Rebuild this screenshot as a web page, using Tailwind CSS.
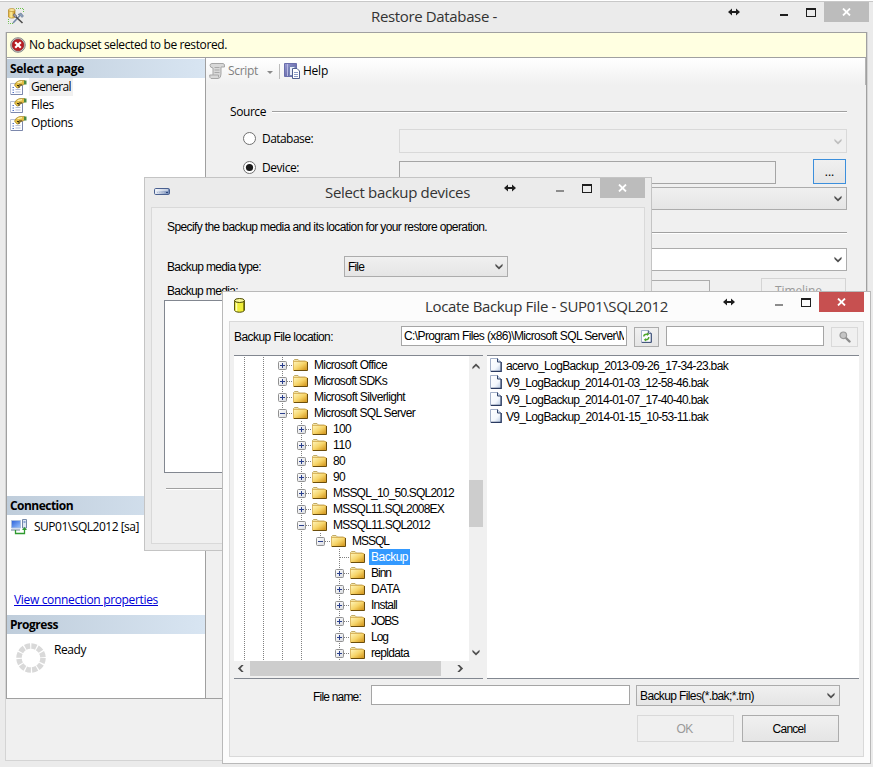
<!DOCTYPE html>
<html lang="en">
<head>
<meta charset="utf-8">
<title>Restore Database</title>
<script src="https://cdn.jsdelivr.net/npm/@tailwindcss/browser@4"></script>
</head>
<body class="relative w-[873px] h-[767px] overflow-hidden bg-white text-black text-[12px] leading-[16px] whitespace-nowrap font-['Open_Sans','Noto_Sans',sans-serif]">

<svg class="absolute w-0 h-0">
  <defs>
    <linearGradient id="gFolder" x1="0" y1="0" x2="1" y2="1"><stop offset="0" stop-color="#fff6bd"/><stop offset=".5" stop-color="#f6d468"/><stop offset="1" stop-color="#cf8d10"/></linearGradient>
    <linearGradient id="gBox" x1="0" y1="0" x2="1" y2="1"><stop offset="0" stop-color="#fff"/><stop offset="1" stop-color="#d9dbe0"/></linearGradient>
    <linearGradient id="gDoc" x1="0" y1="0" x2="1" y2="1"><stop offset="0" stop-color="#fff"/><stop offset=".6" stop-color="#f4f8fd"/><stop offset="1" stop-color="#b4c6e0"/></linearGradient>
    <linearGradient id="gGold" x1="0" y1="0" x2="1" y2="0"><stop offset="0" stop-color="#e0a92a"/><stop offset=".4" stop-color="#fff0a0"/><stop offset="1" stop-color="#c4860c"/></linearGradient>
    <linearGradient id="gBook" x1="0" y1="0" x2="1" y2="1"><stop offset="0" stop-color="#9a9cd4"/><stop offset="1" stop-color="#4b4f92"/></linearGradient>
    <linearGradient id="gScreen" x1="0" y1="0" x2="1" y2="1"><stop offset="0" stop-color="#2a5fd8"/><stop offset="1" stop-color="#9cc6ff"/></linearGradient>
    <linearGradient id="gDisk" x1="0" y1="0" x2="1" y2="0"><stop offset="0" stop-color="#f4f7fb"/><stop offset="1" stop-color="#6d86b4"/></linearGradient>

    <symbol id="folder" viewBox="0 0 15 12">
      <path d="M.5 3V1.500L1.500 .5H5L6.500 2H12.500V4" fill="#f2e2a4" stroke="#c2ab66"/>
      <path d="M.5 2.500H14V11.500H.5Z" fill="url(#gFolder)" stroke="#d3a94a" stroke-width=".8"/>
      <path d="M14.500 3V11.500H1" fill="none" stroke="#6b4d0c" stroke-width="1"/>
    </symbol>
    <symbol id="doc" viewBox="0 0 12 14">
      <path d="M.5 .5H7.5L11 4V13.5H.5Z" fill="url(#gDoc)" stroke="#a3b0c8"/>
      <path d="M7.5 .5V4H11" fill="#cfdcee" stroke="#33456b"/>
      <path d="M11.200 4V13.400H1" fill="none" stroke="#2a3a60" stroke-width="1.300"/>
    </symbol>
    <symbol id="page" viewBox="0 0 17 15">
      <path d="M.5 3.500H12.500V14.500H.5Z" fill="#fdfdff" stroke="#b8bfd2"/>
      <path d="M12.500 5V14.500H1" fill="none" stroke="#7c88ac"/>
      <path d="M2.500 7.500H4M2.500 10H4M2.500 12.500H4" stroke="#5475c6" stroke-width="1.200"/>
      <path d="M5.500 9.500H10.500M5.500 12H10.500" stroke="#b4bdd6"/>
      <path d="M4.500 5L6.500 2L9.500 .500H14.500V4L13 5H11.500L8.500 8H7L5.500 6.500Z" fill="#e3bd45" stroke="#a5862c" stroke-width=".7"/>
      <path d="M7.500 2.700L12 1.700" stroke="#fff4b4" stroke-width="1.300"/>
      <path d="M14 .500H16.500V4.500H14Z" fill="#4b8a3f"/>
      <path d="M7 5.500h2M8 7h2M9 5h3" stroke="#3a3012" stroke-width="1"/>
    </symbol>
    <symbol id="chev" viewBox="0 0 9 7"><path d="M.5 .5V3L4.500 7L8.500 3V.5L4.500 4Z" fill="currentColor"/></symbol>
    <symbol id="x" viewBox="0 0 9 8"><path d="M1 .5L8 7.500M8 .5L1 7.500" stroke="#fff" stroke-width="1.800" fill="none"/></symbol>
    <symbol id="wbtn" viewBox="0 0 96 20">
      <path d="M0 10L4 6.500V9H8V6.500L12 10L8 13.500V11H4V13.500Z" fill="#1e1e1e"/>
      <path d="M52 12H60V14H52Z" fill="currentColor"/>
      <path d="M78 6H88V15H78ZM79 8V14H87V8Z" fill="#1e1e1e" fill-rule="evenodd"/>
    </symbol>
  </defs>
</svg>

<!-- Restore Database window -->
<section class="absolute inset-0 top-px border-t border-[#c8c8c8] bg-[#ebebeb] flex flex-col">
  <header class="grid h-[30px] shrink-0">
    <h1 class="col-start-1 row-start-1 pr-[5px] text-center text-[15px] leading-[28px] text-[#333]"><span data-w="126">Restore Database -</span></h1>
    <div class="col-start-1 row-start-1 flex items-start pl-[8px] pr-[4px]">
      <svg class="mt-[6px] w-[16px] h-[16px]" viewBox="0 0 16 16">
        <path d="M8 .5H15.500V5M.5 11V15.500H6" fill="none" stroke="#6cc04a" stroke-dasharray="1 1"/>
        <path d="M.5 2V9C1.500 10.500 6 10.500 7 9V2Z" fill="url(#gGold)" stroke="#a97a16" stroke-width=".6"/>
        <ellipse cx="3.800" cy="2" rx="3.300" ry="1.500" fill="#fbe79a" stroke="#a97a16" stroke-width=".6"/>
        <path d="M5 15L12 7.500" stroke="#7489a8" stroke-width="1.600"/><path d="M6.500 7.500L14.500 15" stroke="#4b4b4b" stroke-width="1.600"/>
        <path d="M10 6.500L13 5L15.500 8L14 9.500L12.500 7.500Z" fill="#8ba0bd" stroke="#50617c" stroke-width=".5"/>
        <path d="M5 7.500L6 5.500L9 8L7.500 9.500Z" fill="#99a" stroke="#555" stroke-width=".5"/>
      </svg>
      <svg class="ml-auto w-[96px] h-[20px] text-[#1e1e1e]"><use href="#wbtn"/></svg>
      <span class="flex h-[20px] w-[45px] items-center justify-center bg-[#bcbcbc]"><svg class="w-[9px] h-[8px]"><use href="#x"/></svg></span>
    </div>
  </header>
  <div class="ml-[5px] mr-[5px] flex h-[729px] flex-col border-x border-b border-[#d4d4d4] bg-[#f0f0f0]">
    <div class="flex h-[667px] shrink-0 flex-col border border-[#a0a0a0]">
      <div class="flex h-[25px] shrink-0 items-center border-b border-[#a0a0a0] bg-[#ffffe1] pl-[3px]">
        <svg class="w-[16px] h-[16px]" viewBox="0 0 16 16"><circle cx="8" cy="8" r="7.300" fill="#c8c8c8" stroke="#8a8a8a"/><circle cx="8" cy="8" r="5.800" fill="#b81c22" stroke="#8c1016" stroke-width=".6"/><path d="M5.200 5.200L10.800 10.800M10.800 5.200L5.200 10.800" stroke="#fff" stroke-width="2.200"/></svg>
        <span class="ml-[3px]" data-w="198">No backupset selected to be restored.</span>
      </div>
      <div class="flex flex-1">
        <aside class="flex w-[199px] flex-col border-r border-[#a0a0a0] bg-white">
          <h2 class="mt-px h-[19px] bg-gradient-to-r from-[#bfcddb] to-[#d8e5f2] pl-[3px] font-bold leading-[20px]"><span data-w="74">Select a page</span></h2>
          <ul class="h-[418px]">
            <li class="flex h-[18px] items-center pl-[3px]"><svg class="w-[17px] h-[15px]"><use href="#page"/></svg><span class="ml-[2px] bg-[#f0f0f0] px-[2px] leading-[18px]"><span data-w="40">General</span></span></li>
            <li class="flex h-[18px] items-center pl-[3px]"><svg class="w-[17px] h-[15px]"><use href="#page"/></svg><span class="ml-[4px]" data-w="23">Files</span></li>
            <li class="flex h-[18px] items-center pl-[3px]"><svg class="w-[17px] h-[15px]"><use href="#page"/></svg><span class="ml-[4px]" data-w="42">Options</span></li>
          </ul>
          <h2 class="h-[19px] bg-gradient-to-r from-[#bfcddb] to-[#d8e5f2] pl-[3px] font-bold leading-[20px]"><span data-w="63">Connection</span></h2>
          <div class="flex h-[24px] items-center pl-[4px]">
            <svg class="w-[17px] h-[16px]" viewBox="0 0 17 16"><path d="M.5 1.500H9.500V9H.5Z" fill="url(#gScreen)" stroke="#a9bede"/><path d="M0 11H9" stroke="#9aa8bb" stroke-width="1.500"/><path d="M11.500 .5H15.500V9H11.500Z" fill="#dfe8f4" stroke="#7488a8"/><path d="M12.500 3H14.500" stroke="#3b67b8"/><path d="M4.500 11V14.500H13.500V10" fill="none" stroke="#2f9a2f" stroke-width="1.300"/><path d="M11 11L13.500 8L16 11Z" fill="#2f9a2f"/></svg>
            <span class="ml-[6px]" data-w="105">SUP01\SQL2012 [sa]</span>
          </div>
          <a class="mt-[53px] block h-[16px] pl-[7px] text-[#0000d8] underline"><span data-w="144">View connection properties</span></a>
          <h2 class="mt-[7px] h-[19px] bg-gradient-to-r from-[#bfcddb] to-[#d8e5f2] pl-[3px] font-bold leading-[20px]"><span data-w="48">Progress</span></h2>
          <div class="flex pl-[9px]">
            <svg class="mt-[9px] w-[30px] h-[30px]" viewBox="0 0 30 30"><circle cx="15" cy="15" r="12" fill="none" stroke="#d9d9d9" stroke-width="5.500" stroke-dasharray="5.080 1.200"/></svg>
            <span class="mt-[8px] ml-[8px]" data-w="32">Ready</span>
          </div>
        </aside>
        <main class="flex-1">
          <div class="flex h-[27px] items-center border-r border-[#b4b4b4] bg-gradient-to-b from-white to-[#f0f0f0] pb-px pl-[3px]">
            <svg class="w-[17px] h-[16px]" viewBox="0 0 17 16"><path d="M3 .5H14Q16 .5 15.500 4H12V11Q12 15 9.500 15.500H2Q.5 15 .7 12H4V5Q1 4.500 1 2.500Q1 .5 3 .5Z" fill="#d8d8d8" stroke="#a6a6a6"/><path d="M5.500 4.500H10.500M5.500 7H10.500M5.500 9.500H10.500M4 12H9.500V14.500" stroke="#a8a8a8" fill="none"/></svg>
            <span class="ml-[2px] text-[#808080]" data-w="30">Script</span>
            <svg class="ml-[9px] mt-[2px] w-[6px] h-[3px]" viewBox="0 0 6 3"><path d="M0 0H6L3 3Z" fill="#8a8a8a"/></svg>
            <span class="ml-[6px] h-[15px] w-px bg-[#bdbdbd]"></span>
            <svg class="ml-[4px] w-[16px] h-[16px]" viewBox="0 0 16 16"><path d="M.5 .5H12.500V13.500H.5Z" fill="url(#gBook)" stroke="#6a6eac"/><path d="M3.500 1V13" stroke="#b9bce4"/><path d="M5.500 3.500H10L12 5.500V12.500H5.500Z" fill="#e9eefa" stroke="#7484b4"/><path d="M8.500 5.500H13L15.500 8V15.500H8.500Z" fill="#fff" stroke="#506090"/><path d="M10 9.500H14M10 11.500H14M10 13.500H14" stroke="#8c9dc8"/></svg>
            <span class="ml-[3px]" data-w="25">Help</span>
          </div>
          <div class="pl-[24px] pr-[19px]">
            <div class="flex pt-[19px]"><span data-w="36">Source</span><span class="ml-[6px] mt-[7px] h-[2px] flex-1 border-t border-[#a0a0a0] bg-white"></span></div>
            <div class="mt-[9px] flex h-[24px] items-start pl-[13px]">
              <svg class="mt-[3px] w-[13px] h-[13px]" viewBox="0 0 13 13"><circle cx="6.500" cy="6.500" r="6" fill="#fff" stroke="#707070"/></svg>
              <span class="ml-[6px] mt-[2px] w-[137px]"><span data-w="51">Database:</span></span>
              <span class="flex h-[24px] flex-1 items-center justify-end border border-[#d9d9d9] pr-[4px] text-[#bfbfbf]"><svg class="w-[8px] h-[7px]"><use href="#chev"/></svg></span>
            </div>
            <div class="mt-[6px] flex h-[28px] items-start pl-[13px]">
              <svg class="mt-[2px] w-[13px] h-[13px]" viewBox="0 0 13 13"><circle cx="6.500" cy="6.500" r="6" fill="#fff" stroke="#707070"/><circle cx="6.500" cy="6.500" r="3.600" fill="#1a1a1a"/></svg>
              <span class="ml-[6px] mt-[1px] w-[137px]"><span data-w="37">Device:</span></span>
              <span class="mt-[2px] h-[23px] w-[377px] border border-[#a5a5a5]"></span>
              <span class="ml-auto mr-px flex h-[25px] w-[33px] items-center justify-center border border-[#3c8fdc] bg-gradient-to-b from-[#f0f0f0] to-[#e5e5e5]">...</span>
            </div>
            <div class="ml-[169px] flex h-[23px] items-center justify-end border border-[#acacac] bg-gradient-to-b from-[#f0f0f0] to-[#e5e5e5] pr-[4px] text-[#505050]"><svg class="w-[8px] h-[7px]"><use href="#chev"/></svg></div>
            <div class="mt-[22px] h-[2px] border-t border-[#a0a0a0] bg-white"></div>
            <div class="ml-[169px] mt-[14px] flex h-[23px] items-center justify-end border border-[#acacac] bg-white pr-[4px] text-[#505050]"><svg class="w-[8px] h-[7px]"><use href="#chev"/></svg></div>
            <div class="mt-[7px] flex justify-between pl-[169px] pr-px">
              <span class="mt-[2px] h-[23px] w-[311px] border border-[#acacac]"></span>
              <span class="h-[25px] w-[85px] border border-[#d4d4d4] pl-[13px] leading-[24px] text-[#9a9a9a]"><span data-w="56">Timeline...</span></span>
            </div>
          </div>
        </main>
      </div>
    </div>
  </div>
</section>

<!-- Select backup devices dialog -->
<section class="absolute left-[144px] top-[177px] flex h-[374px] w-[508px] flex-col border border-[#c4c4c4] bg-[#ebebeb] font-['Liberation_Sans',sans-serif]">
  <header class="grid h-[29px] shrink-0 font-['Open_Sans','Noto_Sans',sans-serif]">
    <h1 class="col-start-1 row-start-1 pr-px text-center text-[15px] leading-[29px] text-[#333]"><span data-w="145">Select backup devices</span></h1>
    <div class="col-start-1 row-start-1 flex items-start pl-[9px] pr-[6px]">
      <svg class="mt-[10px] w-[16px] h-[7px]" viewBox="0 0 16 7"><rect x=".5" y=".5" width="15" height="6" rx="1.200" fill="url(#gDisk)" stroke="#4a6090"/><path d="M2 2H14" stroke="#fff"/><path d="M3 4.500H10" stroke="#b4bfd6" stroke-dasharray="1 1"/><path d="M12 4.500H14" stroke="#2b457c"/></svg>
      <svg class="ml-auto w-[96px] h-[20px] text-[#8c8c8c]"><use href="#wbtn"/></svg>
      <span class="flex h-[20px] w-[45px] items-center justify-center bg-[#bcbcbc]"><svg class="w-[9px] h-[8px]"><use href="#x"/></svg></span>
    </div>
  </header>
  <div class="mx-[6px] h-[337px] border border-[#d9d9d9] bg-[#f0f0f0] pl-[12px]">
    <p class="mt-[11px] pl-[3px]"><span data-w="320">Specify the backup media and its location for your restore operation.</span></p>
    <div class="mt-[21px] flex h-[21px] items-center pl-[3px]">
      <span class="w-[177px]"><span data-w="94">Backup media type:</span></span>
      <span class="flex h-[21px] w-[164px] items-center justify-between border border-[#acacac] bg-gradient-to-b from-[#f0f0f0] to-[#e5e5e5] pl-[3px] pr-[4px]"><span data-w="16">File</span><svg class="w-[8px] h-[7px] text-[#505050]"><use href="#chev"/></svg></span>
    </div>
    <p class="mt-[6px] pl-[3px]"><span data-w="71">Backup media:</span></p>
    <div class="mt-px h-[173px] w-[460px] border border-[#828790] bg-white"></div>
    <div class="ml-[2px] mt-[15px] h-[2px] w-[460px] border-t border-[#a0a0a0] bg-white"></div>
  </div>
</section>

<!-- Locate Backup File dialog -->
<section class="absolute left-[222px] top-[291px] flex h-[473px] w-[649px] flex-col border border-[#b9b9b9] bg-[#fcfcfc] font-['Liberation_Sans',sans-serif]">
  <header class="grid h-[29px] shrink-0 font-['Open_Sans','Noto_Sans',sans-serif]">
    <h1 class="col-start-1 row-start-1 text-center text-[15px] leading-[29px] text-[#333]"><span data-w="243">Locate Backup File - SUP01\SQL2012</span></h1>
    <div class="col-start-1 row-start-1 flex items-start pl-[11px] pr-[6px]">
      <svg class="mt-[6px] w-[11px] h-[15px]" viewBox="0 0 11 15"><path d="M.6 2.500V12.500C2 14.800 9 14.800 10.400 12.500V2.500Z" fill="#f0ee3a" stroke="#4c4a00"/><path d="M2.500 4.500V13" stroke="#ffffb0" stroke-width="1.500"/><path d="M9.500 4V13" stroke="#8f8c10"/><ellipse cx="5.500" cy="2.500" rx="4.900" ry="2" fill="#fbfa9c" stroke="#4c4a00"/></svg>
      <svg class="ml-auto w-[96px] h-[20px] text-[#8c8c8c]"><use href="#wbtn"/></svg>
      <span class="flex h-[20px] w-[45px] items-center justify-center bg-[#c75050]"><svg class="w-[9px] h-[8px]"><use href="#x"/></svg></span>
    </div>
  </header>
  <div class="mx-[6px] flex h-[436px] flex-col border border-[#d9d9d9] bg-[#f0f0f0] px-[4px]">
    <div class="mt-[4px] flex h-[21px] shrink-0 items-center">
      <span class="w-[167px]"><span data-w="99">Backup File location:</span></span>
      <span class="h-[20px] w-[226px] self-start border border-[#a5a5a5] bg-white px-[2px]"><span class="block w-[220px] overflow-hidden leading-[18px]"><span data-w="224">C:\Program Files (x86)\Microsoft SQL Server\M</span></span></span>
      <span class="ml-[7px] flex h-[20px] w-[25px] items-center justify-center border border-[#acacac] bg-gradient-to-b from-[#f0f0f0] to-[#e5e5e5]">
        <svg class="w-[11px] h-[13px]" viewBox="0 0 12 14"><path d="M.5 .5H8L11 3.500V13.500H.5Z" fill="#fdfdff" stroke="#9aa9c6"/><path d="M11.300 3.500V13.400H1M8 .5V3.500H11" fill="none" stroke="#2c4069"/><path d="M3 7Q3 4.500 6 4.500H7" fill="none" stroke="#4ea62c" stroke-width="1.500"/><path d="M6.500 2.500L9 4.500L6.500 6.500Z" fill="#4ea62c"/><path d="M8.500 7.500Q8.500 10.500 5.500 10.500H5" fill="none" stroke="#4ea62c" stroke-width="1.500"/><path d="M5.500 8.500L3 10.500L5.500 12.500Z" fill="#4ea62c"/></svg>
      </span>
      <span class="ml-[7px] h-[20px] w-[158px] self-start border border-[#a5a5a5] bg-white"></span>
      <span class="ml-[7px] flex h-[20px] w-[27px] items-center justify-center border border-[#d9d9d9]">
        <svg class="w-[12px] h-[12px]" viewBox="0 0 12 12"><path d="M6.500 6.500L10.500 10.500" stroke="#8c8c8c" stroke-width="2.400" stroke-linecap="round"/><circle cx="4.300" cy="4.300" r="3.300" fill="#c4c4c4" stroke="#9a9a9a" stroke-width="1.200"/></svg>
      </span>
    </div>
    <div class="mt-[8px] flex h-[324px] shrink-0 gap-[4px]">
      <div class="flex w-[249px] flex-col border-y border-[#828790]">
        <div class="flex h-[305px]">
          <ul id="tree" class="w-[235px] overflow-hidden bg-white pl-px pt-px"></ul>
          <div class="flex w-[14px] flex-col items-center text-[#505050]">
            <svg class="mt-[7px] w-[8px] h-[7px] rotate-180"><use href="#chev"/></svg>
            <span class="mt-[110px] h-[47px] w-[14px] bg-[#cdcdcd]"></span>
            <svg class="mt-[122px] w-[8px] h-[7px]"><use href="#chev"/></svg>
          </div>
        </div>
        <div class="flex h-[15px] w-[235px] items-center text-[#505050]">
          <svg class="ml-[3px] w-[8px] h-[7px] rotate-90"><use href="#chev"/></svg>
          <span class="ml-[5px] h-[15px] w-[191px] bg-[#cdcdcd]"></span>
          <svg class="ml-[15px] w-[8px] h-[7px] -rotate-90"><use href="#chev"/></svg>
        </div>
      </div>
      <ul id="files" class="w-[372px] border-y border-[#828790] bg-white pl-[3px] pt-[1px]"></ul>
    </div>
    <div class="mt-[6px] flex h-[21px] shrink-0 items-center pl-[79px]">
      <span class="mt-[2px] w-[58px]"><span data-w="48">File name:</span></span>
      <span class="h-[20px] w-[259px] self-start border border-[#a5a5a5] bg-white"></span>
      <span class="ml-[6px] flex h-[21px] w-[204px] items-center justify-between border border-[#acacac] bg-gradient-to-b from-[#f0f0f0] to-[#e5e5e5] pl-[3px] pr-[4px]"><span data-w="114">Backup Files(*.bak;*.trn)</span><svg class="w-[8px] h-[7px] text-[#505050]"><use href="#chev"/></svg></span>
    </div>
    <div class="mt-[9px] flex h-[27px] shrink-0 gap-[8px] pl-[403px] text-center leading-[26px]">
      <span class="w-[97px] border border-[#d9d9d9] pr-[2px] text-[#9a9a9a]"><span data-w="16">OK</span></span>
      <span class="w-[97px] border border-[#acacac] bg-gradient-to-b from-[#f0f0f0] to-[#e5e5e5] pr-[3px]"><span data-w="33">Cancel</span></span>
    </div>
  </div>
</section>

<script>
// Guide cells per row: v = line through, s = gap, + / - = node box, l = last node, e = leaf
const rows = [
  ['vv+', 'Microsoft Office', 73], ['vv+', 'Microsoft SDKs', 73], ['vv+', 'Microsoft Silverlight', 91], ['vv-', 'Microsoft SQL Server', 101],
  ['vvv+', '100', 18], ['vvv+', '110', 18], ['vvv+', '80', 12], ['vvv+', '90', 12],
  ['vvv+', 'MSSQL_10_50.SQL2012', 121], ['vvv+', 'MSSQL11.SQL2008EX', 111], ['vvv-', 'MSSQL11.SQL2012', 97],
  ['vvvvl', 'MSSQL', 37], ['vvvvse', 'Backup', 37], ['vvvvs+', 'Binn', 20], ['vvvvs+', 'DATA', 29],
  ['vvvvs+', 'Install', 26], ['vvvvs+', 'JOBS', 27], ['vvvvs+', 'Log', 17], ['vvvvs+', 'repldata', 38]
];
const dot = d => `<path d="${d}" stroke="#808080" stroke-dasharray="1 1" fill="none"/>`;
const cell = c => {
  if (c === 's') return '<span class="w-[19px] shrink-0"></span>';
  let s = dot(c === 'l' ? 'M9.5 0V8' : 'M9.5 0V16');
  if (c !== 'v') s += dot('M10 8.5H19');
  if ('+-l'.includes(c)) {
    s += '<rect x="5.5" y="4.500" width="8" height="8" rx="1" fill="url(#gBox)" stroke="#919191"/><path d="M7 8.500H12" stroke="#2a3f8c"/>';
    if (c === '+') s += '<path d="M9.500 6V11" stroke="#2a3f8c"/>';
  }
  return `<svg class="w-[19px] h-[16px] shrink-0" viewBox="0 0 19 16">${s}</svg>`;
};
document.getElementById('tree').innerHTML = rows.map(([g, t, w]) =>
  `<li class="flex h-[16px] items-center">${[...g].map(cell).join('')}<svg class="ml-[1px] w-[15px] h-[12px] shrink-0"><use href="#folder"/></svg>` +
  `<span class="${t === 'Backup' ? 'ml-[4px] px-[2px] bg-[#3399ff] text-white' : 'ml-[6px]'}"><span data-w="${w}">${t}</span></span></li>`).join('');
document.getElementById('files').innerHTML = [
  ['acervo_LogBackup_2013-09-26_17-34-23.bak', 222], ['V9_LogBackup_2014-01-03_12-58-46.bak', 202],
  ['V9_LogBackup_2014-01-07_17-40-40.bak', 202], ['V9_LogBackup_2014-01-15_10-53-11.bak', 202]
].map(([t, w]) => `<li class="flex h-[17px] items-center"><svg class="mb-px w-[12px] h-[14px]"><use href="#doc"/></svg><span class="ml-[4px]" data-w="${w}">${t}</span></li>`).join('');

// Track each label to its intended width, once styles and fonts are in place
const fit = () => document.querySelectorAll('[data-w]').forEach(e => {
  e.style.letterSpacing = '0px';
  const w = e.getBoundingClientRect().width;
  e.style.letterSpacing = ((+e.dataset.w - w) / e.textContent.length) + 'px';
});
addEventListener('load', () => { fit(); document.fonts.ready.then(fit); requestAnimationFrame(fit); });
</script>
</body>
</html>
